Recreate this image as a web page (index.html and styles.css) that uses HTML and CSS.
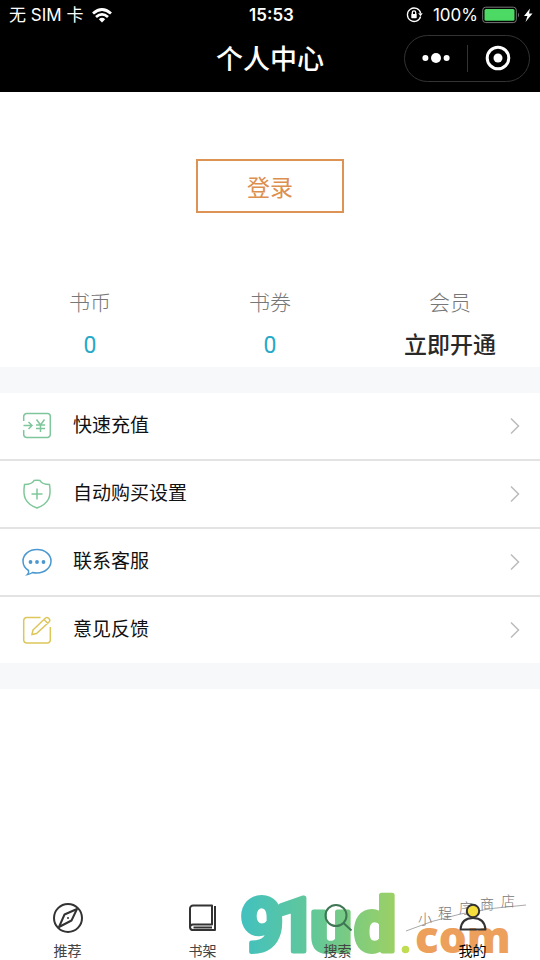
FILE: index.html
```html
<!DOCTYPE html>
<html lang="zh-CN">
<head>
<meta charset="utf-8">
<meta name="viewport" content="width=device-width, initial-scale=1">
<title>个人中心</title>
<link rel="stylesheet" href="styles.css">
</head>
<body>
<header class="header">
  <div class="status">
    <div class="status-left"><span>无 SIM 卡</span>
      <svg width="20" height="15" viewBox="0 0 20 15" fill="none" stroke="#fff" stroke-width="2.8"><path d="M1 5.5Q10-2.5 19 5.5"/><path d="M4 9Q10 3.8 16 9"/><path d="M6.8 11.2Q10 8.4 13.2 11.2L10 14.4Z" fill="#fff" stroke="none"/></svg>
    </div>
    <time class="clock">15:53</time>
    <div class="status-right">
      <svg width="17" height="16" viewBox="0 0 17 16" fill="none" stroke="#fff" stroke-width="1.3"><path d="M14.6 9.5A6.7 6.7 0 1 1 14.6 6"/><path d="M12.2 6.3h4.5l-2.2 3z" fill="#fff" stroke="none"/><rect x="5.3" y="7" width="5.4" height="4.2" rx=".6" fill="#fff" stroke="none"/><path d="M6.3 7V5.5a1.7 1.7 0 0 1 3.4 0V7"/></svg>
      <span class="percent">100%</span>
      <svg width="52" height="18" viewBox="0 0 52 18"><rect x=".7" y="1.2" width="33.6" height="15.4" rx="3" fill="none" stroke="#777"/><rect x="2.5" y="3" width="30" height="11.8" rx="1.5" fill="#4cd964"/><path d="M36 6.5q2 2.5 0 5z" fill="#777"/><path d="M48 2.5L42 10h3.4L43.5 16l7-8.5H47z" fill="#fff"/></svg>
    </div>
  </div>
  <div class="titlebar">
    <h1>个人中心</h1>
    <div class="capsule">
      <button type="button" aria-label="更多"><svg width="28" height="12" viewBox="0 0 28 12" fill="#fff"><circle cx="3.4" cy="6" r="3"/><circle cx="14" cy="6" r="5"/><circle cx="24.6" cy="6" r="3"/></svg></button>
      <button type="button" aria-label="关闭"><svg width="26" height="26" viewBox="0 0 26 26"><circle cx="13" cy="13" r="10.8" fill="none" stroke="#fff" stroke-width="3"/><circle cx="13" cy="13" r="4.5" fill="#fff"/></svg></button>
    </div>
  </div>
</header>
<main class="main">
  <section class="login"><button type="button">登录</button></section>
  <dl class="stats">
    <div><dt>书币</dt><dd>0</dd></div>
    <div><dt>书券</dt><dd>0</dd></div>
    <div><dt>会员</dt><dd class="vip">立即开通</dd></div>
  </dl>
  <ul class="menu">
    <li><a href="#recharge">
      <svg class="icon green" viewBox="0 0 30 30"><path d="M1.700 10V5.500a3 3 0 0 1 3-3h20.600a3 3 0 0 1 3 3v18a3 3 0 0 1-3 3H4.700a3 3 0 0 1-3-3V19M1.500 14.500h8.500M6.500 11l3.500 3.500L6.500 18M14.500 8.500l4 5.500L22.500 8.500M14 14h9M14 17.500h9M18.500 14v7"/></svg>
      <span>快速充值</span><svg class="arrow" viewBox="0 0 10 18"><path d="M1 1.500l7.500 7.500L1 16.500"/></svg></a></li>
    <li><a href="#auto-buy">
      <svg class="icon green" viewBox="0 0 30 30"><path d="M12 1.500Q15 .8 18 1.500Q20 5.500 27.500 5.500Q29 15 26.500 20Q23.500 26 15 29Q6.500 26 3.500 20Q1 15 2.500 5.500Q10 5.500 12 1.500ZM15 9.500v11M9.500 15h11"/></svg>
      <span>自动购买设置</span><svg class="arrow" viewBox="0 0 10 18"><path d="M1 1.500l7.500 7.500L1 16.500"/></svg></a></li>
    <li><a href="#service">
      <svg class="icon blue" viewBox="0 0 30 30"><path d="M6.500 23.500Q1 20 1 14C1 7.500 7 2.500 15 2.500s14 5 14 11.500-6 12-14 12q-2.500 0-4.500-.5Q8.500 27 5.500 27.500Q7.200 26 6.500 23.500Z"/><g class="dots"><circle cx="8.500" cy="15" r="1.900"/><circle cx="15" cy="15" r="1.900"/><circle cx="21.500" cy="15" r="1.900"/></g></svg>
      <span>联系客服</span><svg class="arrow" viewBox="0 0 10 18"><path d="M1 1.500l7.500 7.500L1 16.500"/></svg></a></li>
    <li><a href="#feedback">
      <svg class="icon yellow" viewBox="0 0 30 30"><path d="M18.500 2.500H4.700a3 3 0 0 0-3 3v19.500a3 3 0 0 0 3 3h20.600a3 3 0 0 0 3-3V12M11 15L23.500 3Q25 1.800 26.700 3.300Q28.600 5 27.300 6.700L14.500 18.500L10 19.500ZM22 4.500l4 4"/></svg>
      <span>意见反馈</span><svg class="arrow" viewBox="0 0 10 18"><path d="M1 1.500l7.500 7.500L1 16.500"/></svg></a></li>
  </ul>
</main>
<footer class="footer">
  <svg class="watermark" width="310" height="80" viewBox="230 880 310 80" role="img" aria-label="91ud.com 小程序商店">
    <defs><linearGradient id="brand" gradientUnits="userSpaceOnUse" x1="243" y1="0" x2="394" y2="0"><stop offset="0" stop-color="#43c1be"/><stop offset=".5" stop-color="#65c895"/><stop offset="1" stop-color="#9bd065"/></linearGradient></defs>
    <g class="brand"><text x="262" y="951">9</text><text x="296" y="951">1</text><text x="331" y="951">u</text><text x="375" y="951">d</text></g>
    <circle cx="405.500" cy="949.500" r="3.800" fill="#bfdc52"/>
    <text class="domain" x="415" y="953">com</text>
    <path d="M406 931Q455 910 526 905" fill="none" stroke="#aaa"/>
    <text class="slogan" x="418 438 459 480 501" y="924 918 913 909 906">小程序商店</text>
  </svg>
  <nav class="tabs">
    <a href="#home"><svg viewBox="0 0 32 32"><circle cx="16" cy="16" r="14"/><path d="M25 7L19.500 18.500L7 25L12.500 12.500Z"/><circle cx="16" cy="16" r="1" fill="#333" stroke="none"/></svg><span>推荐</span></a>
    <a href="#shelf"><svg viewBox="0 0 32 32"><path d="M6 3.500h19v19H6a3 3 0 0 0-3 3V6.500a3 3 0 0 1 3-3ZM3 25.500a3 3 0 0 0 3 2.500h22V4M6.500 25.500h18.500"/></svg><span>书架</span></a>
    <a href="#search"><svg viewBox="0 0 32 32" class="search"><circle cx="14" cy="13.500" r="10.500"/><path d="M21.500 21l8 7.500"/></svg><span>搜索</span></a>
    <a href="#mine" class="active" aria-current="page"><svg viewBox="0 0 32 32"><circle cx="16" cy="9" r="6.200" fill="#f5df3e"/><path d="M3.500 27.500Q4.500 16 16 16t12.500 11.500Z"/></svg><span>我的</span></a>
  </nav>
</footer>
</body>
</html>
```
FILE: styles.css
```css
* { box-sizing: border-box; }
body {
  margin: 0;
  min-height: 100vh;
  display: flex;
  flex-direction: column;
  background: #fff;
  color: #111;
  font-family: "Liberation Sans", "Noto Sans CJK SC", sans-serif;
}
button { font: inherit; cursor: pointer; }
a { color: inherit; text-decoration: none; }
.header { background: #000; color: #fff; height: 92px; }
.status {
  display: grid;
  grid-template-columns: 1fr auto 1fr;
  align-items: center;
  height: 30px;
  padding: 0 6px 0 9px;
  font-family: Inter, "Noto Sans CJK SC", sans-serif;
  font-size: 17px;
  line-height: 30px;
}
.status-left, .status-right { display: flex; align-items: center; gap: 9px; }
.status-right { justify-content: flex-end; gap: 4px; }
.percent { margin-left: 6px; }
.clock { font-weight: 600; }
.titlebar {
  display: grid;
  grid-template-columns: 1fr auto 1fr;
  align-items: center;
  height: 56px;
  padding: 0 10px;
}
.titlebar h1 {
  grid-column: 2;
  margin: 4px 0 0;
  font-size: 27px;
  font-weight: 500;
  line-height: 40px;
}
.capsule {
  justify-self: end;
  display: flex;
  width: 126px;
  height: 47px;
  border: 1px solid #333;
  border-radius: 24px;
}
.capsule button {
  flex: 1;
  display: flex;
  align-items: center;
  justify-content: center;
  margin: 9px 0;
  padding: 0;
  border: 0;
  background: none;
}
.capsule button + button { border-left: 1px solid #333; }
.main { flex: 1; }
.login { display: flex; justify-content: center; padding: 67px 0; }
.login button {
  width: 148px;
  height: 54px;
  border: 2px solid #dc9353;
  background: #fff;
  color: #dc8f4f;
  font-size: 23px;
}
.stats {
  display: grid;
  grid-template-columns: repeat(3, 1fr);
  margin: 0;
  padding: 6px 0 1px;
  text-align: center;
}
.stats dt { color: #777; font-size: 21px; font-weight: 300; line-height: 34px; }
.stats dd {
  margin: 5px 0 0;
  color: #24a9c9;
  font-family: Roboto, "Noto Sans CJK SC", sans-serif;
  font-size: 23px;
  line-height: 41px;
}
.stats .vip { color: #292929; font-weight: 500; }
.menu {
  margin: 0;
  padding: 0;
  list-style: none;
  border-top: 26px solid #f7f8fa;
  border-bottom: 26px solid #f7f8fa;
}
.menu li + li { border-top: 2px solid #e3e3e3; }
.menu a {
  display: flex;
  align-items: center;
  height: 66px;
  padding: 0 20px 0 22px;
  font-size: 19px;
}
.menu span { flex: 1; margin-left: 21px; padding-bottom: 6px; }
.icon { width: 30px; height: 30px; fill: none; stroke: currentColor; stroke-width: 1.5; }
.green { color: #7fc79a; }
.blue { color: #4a98cf; }
.yellow { color: #ddc65a; }
.dots { fill: currentColor; stroke: none; }
.arrow { width: 10px; height: 18px; fill: none; stroke: #bbb; stroke-width: 1.5; }
.footer { position: relative; height: 80px; }
.watermark { position: absolute; right: 0; bottom: 0; overflow: visible; pointer-events: none; }
.brand {
  fill: url(#brand);
  stroke: url(#brand);
  stroke-width: 5px;
  stroke-linejoin: round;
  font-family: Roboto, sans-serif;
  font-size: 75px;
  font-weight: 700;
  text-anchor: middle;
}
.domain { fill: #eda05b; font-family: "Open Sans", sans-serif; font-size: 44px; font-weight: 800; }
.slogan { fill: #777; font-family: "Noto Sans CJK SC", sans-serif; font-size: 14px; font-weight: 300; }
.tabs { position: relative; display: grid; grid-template-columns: repeat(4, 1fr); height: 100%; }
.tabs a {
  display: flex;
  flex-direction: column;
  align-items: center;
  padding-top: 22px;
  color: #444;
  font-size: 14px;
  line-height: 20px;
}
.tabs svg { width: 32px; height: 32px; margin-bottom: 7px; fill: none; stroke: #333; stroke-width: 2; stroke-linejoin: round; }
.tabs .search { stroke: #3f7654; }
.tabs .active { color: #000; }
```
